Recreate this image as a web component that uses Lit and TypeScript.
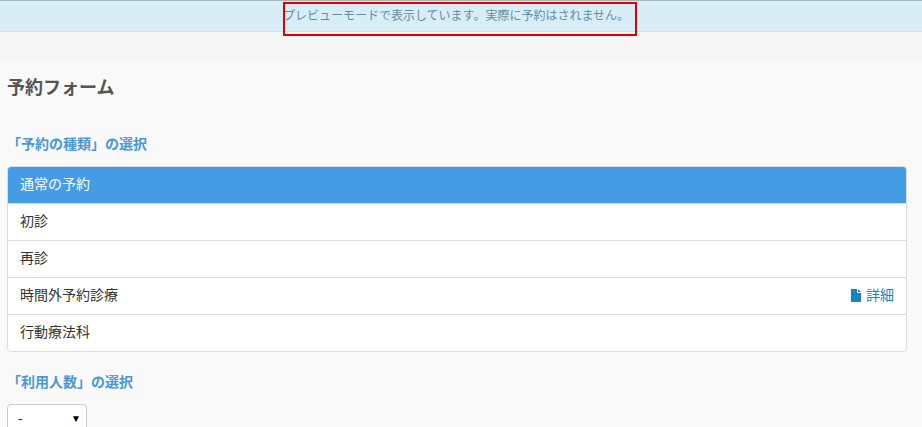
import { LitElement, html, css } from "lit";
import { customElement } from "lit/decorators.js";

@customElement("app-root")
export class AppRoot extends LitElement {
  static styles = css`
    :host {
      display: block;
      height: 427px;
      overflow: hidden;
      background: #f9f9f9;
      font-family: "Liberation Sans", "Noto Sans CJK JP", sans-serif;
      font-size: 14px;
      color: #333;
    }
    .alert {
      height: 30px;
      background: #d9edf7;
      border-top: 1px solid #9fb6bd;
      border-bottom: 1px solid #bce8f1;
      color: #5f8ca6;
      font-size: 12px;
      display: flex;
      justify-content: center;
      padding-right: 10px;
      line-height: 30px;
      position: relative;
    }
    .mark {
      position: absolute;
      left: 283px;
      top: 1px;
      width: 350px;
      height: 30px;
      border: 2px solid #e00000;
    }
    .band { height: 30px; background: #f6f6f6; }
    main { padding: 0 15px 0 7px; }
    h1 {
      margin: 0;
      padding-top: 13px;
      font-size: 18px;
      line-height: 26px;
      font-weight: 700;
      color: #555;
    }
    h2 {
      margin: 0;
      font-size: 14px;
      line-height: 20px;
      font-weight: 700;
      color: #4a97d8;
    }
    .t1 { padding-top: 33px; }
    .list {
      margin-top: 12px;
      background: #fff;
      border: 1px solid #ddd;
      border-radius: 4px;
      overflow: hidden;
    }
    .row {
      height: 31px;
      padding: 0 12px 5px;
      display: flex;
      align-items: center;
      justify-content: space-between;
      border-top: 1px solid #ddd;
    }
    .row:first-child {
      border-top: 0;
      background: #449ce6;
      color: #fff;
    }
    .detail {
      display: flex;
      align-items: center;
      gap: 5px;
      color: #1f84c2;
    }
    .detail svg { display: block; margin-top: 3px; }
    .t2 { margin-top: 20px; }
    .sel {
      margin-top: 12px;
      width: 63px;
      height: 34px;
      background: #fff;
      border: 1px solid #ccc;
      border-radius: 4px;
      display: flex;
      justify-content: space-between;
      padding: 0 5px 0 10px;
      line-height: 28px;
    }
    .arrow { font-size: 10px; color: #000; }
  `;

  render() {
    const rows = ["通常の予約", "初診", "再診", "時間外予約診療", "行動療法科"];
    return html`
      <div class="alert">
        プレビューモードで表示しています。実際に予約はされません。
        <div class="mark"></div>
      </div>
      <div class="band"></div>
      <main>
        <h1>予約フォーム</h1>
        <h2 class="t1">「予約の種類」の選択</h2>
        <div class="list">
          ${rows.map(
            (r, i) => html`<div class="row">
              <span>${r}</span>
              ${i === 3
                ? html`<span class="detail">
                    <svg width="10" height="13" viewBox="0 0 10 13">
                      <path fill="#1482c4" d="M0 0H6V4H10V13H0ZM7 0L10 3H7Z" />
                    </svg>
                    詳細
                  </span>`
                : ""}
            </div>`
          )}
        </div>
        <h2 class="t2">「利用人数」の選択</h2>
        <div class="sel"><span>-</span><span class="arrow">▼</span></div>
      </main>
    `;
  }
}
